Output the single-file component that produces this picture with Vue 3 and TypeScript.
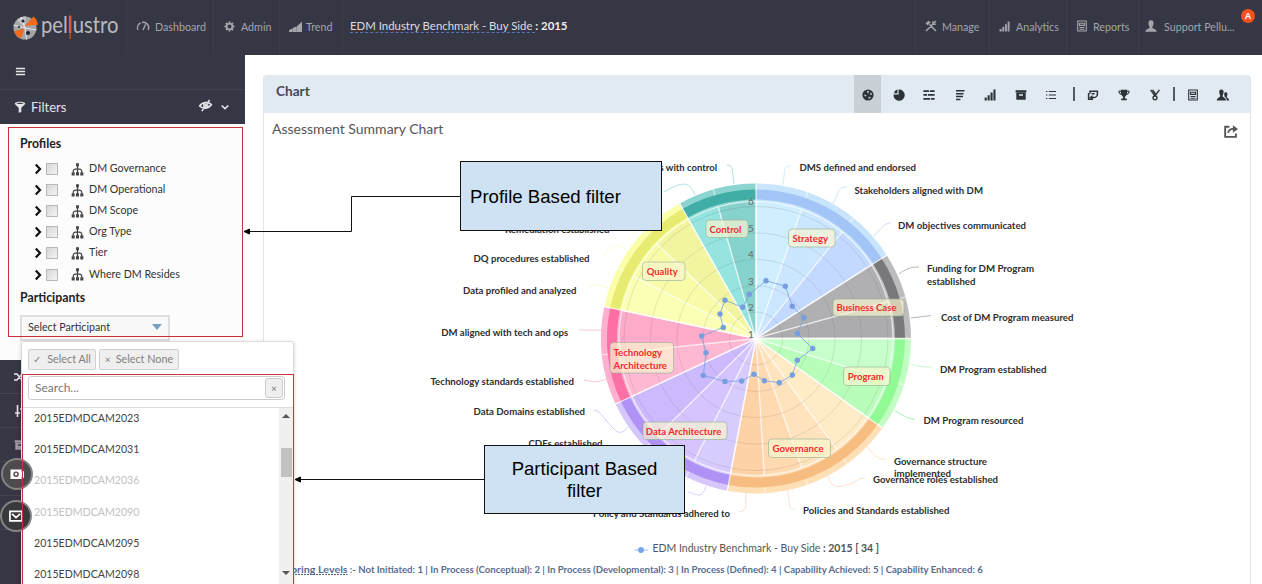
<script setup lang="ts">
import { h } from 'vue'

type Shape = { f?: string; s?: string; w?: number }

const shapes: Record<string, Shape> = {
  gauge: { s: 'M.8 10A5.6 5.6 0 0 1 3.6 3M5 2.5A5.4 5.4 0 0 1 11.2 10M6 10L8.6 4.4', w: 1.4 },
  gear: { s: 'M6 2.8A3.2 3.2 0 1 0 6 9.2A3.2 3.2 0 1 0 6 2.8M6 .6V2.4M6 9.6V11.4M.6 6H2.4M9.6 6H11.4M2.2 2.2L3.4 3.4M8.6 8.6L9.8 9.8M9.8 2.2L8.6 3.4M3.4 8.6L2.2 9.8', w: 2 },
  trend: { f: 'M0 11V9.5L3.4 7.6V11ZM3.6 11V7.4L6 6.2L7 6.8V11ZM7.2 11V5.8L12 1.6V11Z' },
  tools: { s: 'M1 11L8 4M11 11L4.4 4.4M1 3.8L4 1.2M2 4.8L5.2 2M8 1.2L7.8 4.2L10.8 4.2M10.8 1L9 3', w: 1.5 },
  bars: { f: 'M.6 8.6H2.8V11.4H.6ZM3.6 6.2H5.7V11.4H3.6ZM6.5 3.6H8.6V11.4H6.5ZM9.4 .6H11.5V11.4H9.4Z' },
  report: { s: 'M1.7 1H10.3V11H1.7ZM3.5 3.2H8.5V5.4H3.5ZM3.5 7.5H8.5M3.5 9.2H8.5', w: 1.1 },
  user: { f: 'M6 .3C8.3 .3 8.8 2 8.5 4.2C8.2 5.6 7.4 6.4 7.3 7.4C7.5 8.6 11.5 9 11.8 11.8H.2C.5 9 4.5 8.6 4.7 7.4C4.6 6.4 3.8 5.6 3.5 4.2C3.2 2 3.7 .3 6 .3Z' },
  menu: { s: 'M1 2.8H11M1 6H11M1 9.2H11', w: 1.7 },
  funnel: { f: 'M.8 2.3C.8 .2 11.2 .2 11.2 2.3C11.2 4 7.6 5.8 7.3 7V11L4.7 11.8V7C4.4 5.8 .8 4 .8 2.3ZM2.4 2.3C3.4 3.2 8.6 3.2 9.6 2.3C8.6 1.5 3.4 1.5 2.4 2.3Z' },
  eye: { s: 'M.6 6.5C3 2.6 8.5 2.2 11.4 5.2C9.2 9 3.4 9.6 .6 6.5ZM9.8 .8L2.6 11.2M6 4.4A1.8 1.8 0 0 0 5 7.5M7.8 5.2A1.6 1.6 0 0 1 6.4 7.6', w: 1.5 },
  down: { s: 'M2 4.2L6 8L10 4.2', w: 2 },
  right: { s: 'M3.8 1.4L8 6L3.8 10.6', w: 2.2 },
  tree: { s: 'M6 .6V11M2 8.5C2 5.8 3 5.4 6 5.4S10 5.8 10 8.5', w: 1.2, f: 'M4.7 .3H7.3V2.9H4.7ZM.6 8.6H3.4V11.6H.6ZM4.6 8.6H7.4V11.6H4.6ZM8.6 8.6H11.4V11.6H8.6Z' },
  ball: { f: 'M6 .4A5.6 5.6 0 1 0 6 11.6A5.6 5.6 0 1 0 6 .4ZM6.1 5L4.8 2.1L7 1.9ZM7.9 6L8.9 3.2L10.2 5.4ZM4.8 6.2L2 5.4L3 7.8ZM6.8 7.6L9.1 8.7L6.4 9.9Z' },
  pie: { f: 'M5.6 .6V5.4H.6A5.6 5.6 0 1 0 5.6 .6ZM4.5 .6V4.3H.8A5 5 0 0 1 4.5 .6Z' },
  sliders: { s: 'M.4 2.2H6M6.9 2.2H11.6M.4 5.9H4M4.9 5.9H11.6M.4 9.8H7M7.9 9.8H11.6', w: 1.7 },
  align: { s: 'M2 1.8H10.5M2 4.7H9.5M2 7.6H9M2 10.4H6.4', w: 1.5 },
  archive: { f: 'M.6 1.2H11.4V3.4H.6ZM1.3 3.8H10.7V10.8H1.3ZM4 5.2V6.8H8V5.2Z' },
  list: { s: 'M1 2.5H2.4M3.8 2.5H11M1 6H2.4M3.8 6H11M1 9.5H2.4M3.8 9.5H11', w: 1.1 },
  compare: { s: 'M3 4.4V2.2H10.4V5C10.4 7 8.6 8.6 6.6 8.6H4.2M4.6 4.8H7.6M1.6 4V10.2H6', w: 1.5, f: 'M2.4 8.4L5.4 6V11Z' },
  trophy: { f: 'M2.8 .8H9.2V1.8H11.6C11.6 4.6 10.3 5.6 8.4 6C7.8 7 7 7.4 6.9 8.2V9.4H8.8V11.2H3.2V9.4H5.1V8.2C5 7.4 4.2 7 3.6 6C1.7 5.6 .4 4.6 .4 1.8H2.8ZM1.5 2.7C1.7 3.8 2.2 4.4 3.1 4.8L2.8 2.7ZM10.5 2.7H9.2L8.9 4.8C9.8 4.4 10.3 3.8 10.5 2.7Z' },
  medal: { s: 'M1.6 .8L5.6 6.4M10.4 .8L6.4 6.4M3.6 .8L6.4 5M6 7A1.9 1.9 0 1 0 6 10.9A1.9 1.9 0 1 0 6 7', w: 1.4 },
  users: { f: 'M4.4 .4C6.4 .4 6.8 2 6.5 4C6.2 5.4 5.6 6 5.6 7C5.8 8.4 8.8 8.6 9 11.5H-.2C0 8.6 3 8.4 3.2 7C3.2 6 2.6 5.4 2.3 4C2 2 2.4 .4 4.4 .4ZM8.8 3.2C10.4 3.2 10.6 4.6 10.3 6C10 7.2 9.7 7.4 9.8 8C10 9 12 9 12.2 11.5H9.8C9.7 9.2 8.5 8.6 7.5 7.8C7.7 7 7.4 6.6 7.3 6C7 4.6 7.2 3.2 8.8 3.2Z' },
  share: { s: 'M4.6 2.4H1V11H10.2V8.2M3.6 7.6C4 5 5.6 4.2 8 4.2', w: 1.6, f: 'M7.6 1L12 4.2L7.6 7.4Z' },
  shuffle: { s: 'M0 3H3L8 9H12M0 9H3L8 3H12', w: 1.6 },
  hash: { s: 'M3.5 0V12M8.5 0V12M1 8H6M6 4H11', w: 1.6 },
  video: { f: 'M.4 2.2H10V4.4L12 3.4V9.4L10 8.2V10.2H.4ZM5.2 3.8A2.3 2.3 0 1 0 5.2 8.5A2.3 2.3 0 1 0 5.2 3.8ZM5.2 5A1.1 1.1 0 1 1 5.2 7.3A1.1 1.1 0 1 1 5.2 5Z' },
  mail: { s: 'M.8 2H11.2V10.2H.8ZM2.6 4.2L6 7.4L9.6 4.2', w: 1.5 },
}

const Icon = (p: { name: string; size?: number }) => {
  const s = shapes[p.name]
  return h('svg', { viewBox: '0 0 12 12', width: p.size ?? 12, height: p.size ?? 12, class: 'icon' }, [
    s.f ? h('path', { d: s.f, fill: 'currentColor', 'fill-rule': 'evenodd' }) : null,
    s.s ? h('path', { d: s.s, fill: 'none', stroke: 'currentColor', 'stroke-width': s.w }) : null,
  ])
}

const profiles = ['DM Governance', 'DM Operational', 'DM Scope', 'Org Type', 'Tier', 'Where DM Resides']
const participants = [
  { id: '2015EDMDCAM2023', off: false },
  { id: '2015EDMDCAM2031', off: false },
  { id: '2015EDMDCAM2036', off: true },
  { id: '2015EDMDCAM2090', off: true },
  { id: '2015EDMDCAM2095', off: false },
  { id: '2015EDMDCAM2098', off: false },
]
const tools = ['ball', 'pie', 'sliders', 'align', 'bars', 'archive', 'list', '|', 'compare', 'trophy', 'medal', '|', 'report', 'users']

const cx = 756
const cy = 338.5
const pt = (r: number, deg: number) => {
  const a = (deg * Math.PI) / 180
  return `${(cx + r * Math.sin(a)).toFixed(2)} ${(cy - r * Math.cos(a)).toFixed(2)}`
}
const wedge = (r: number, a: number, b: number) => `M${cx} ${cy}L${pt(r, a)}A${r} ${r} 0 0 1 ${pt(r, b)}Z`
const band = (r1: number, r2: number, a: number, b: number) =>
  `M${pt(r1, a)}A${r1} ${r1} 0 0 1 ${pt(r1, b)}L${pt(r2, b)}A${r2} ${r2} 0 0 0 ${pt(r2, a)}Z`

const groups = [
  { at: [0, 19.5, 39, 57.5], fill: ['#cfeeff', '#cbe6ff', '#c3d9ff'], ring: '#a3c4f6', edge: '#c8e5fc' },
  { at: [57.5, 74.5, 90], fill: ['#b0b0b2', '#acacae'], ring: '#79797b', edge: '#bcbcbd' },
  { at: [90, 107.5, 125.3], fill: ['#c6ffc9', '#b8fdba'], ring: '#90fa94', edge: '#c2fdc4' },
  { at: [125.3, 144, 160.6, 176.6, 190.7], fill: ['#ffebc6', '#ffe3bd', '#ffdab1', '#fed2a7'], ring: '#f7bd80', edge: '#ffdfb5' },
  { at: [190.7, 206.8, 225.4, 245], fill: ['#d8ccff', '#d5c4ff', '#cdb9fe'], ring: '#b091f5', edge: '#d5c6fb' },
  { at: [245, 264, 281.9], fill: ['#ffb8d3', '#feaacb'], ring: '#fd70a6', edge: '#ffb0cf' },
  { at: [281.9, 297, 313.7, 330.5], fill: ['#faffb5', '#f8fca9', '#f2f59f'], ring: '#e7eb71', edge: '#faffa8' },
  { at: [330.5, 344, 360], fill: ['#95e4df', '#86d2cc'], ring: '#40ada6', edge: '#8bd4cf' },
]
const scale = [26.5, 53, 79, 105.5, 132]

const points = [
  [766, 280.7], [785.3, 286.2], [792.3, 306.2], [804, 317.7], [797.3, 333.5], [812.7, 348.5], [797.3, 360.2],
  [792.3, 375], [779.3, 382.7], [764.3, 380.7], [754, 374.3], [741.7, 381], [725, 381.4], [703.3, 375.4],
  [706, 352.7], [701.7, 336], [723.3, 327.4], [720, 314], [725, 300.2], [742.7, 307.3], [749.3, 294.2],
]
const line = points.map((p) => p.join(',')).join(' ')

type Label = [string, number, number, number]
const labels: Label[] = [
  ['DMS defined and endorsed', 799.5, 116.5, 171],
  ['Stakeholders aligned with DM', 854.5, 128.5, 193.5],
  ['DM objectives communicated', 898, 128, 228.8],
  ['Funding for DM Program', 927, 107, 272],
  ['established', 927, 48.5, 285],
  ['Cost of DM Program measured', 941, 132.5, 321],
  ['DM Program established', 940, 106.5, 372.5],
  ['DM Program resourced', 923.5, 100, 424],
  ['Governance structure', 894, 93, 465],
  ['implemented', 894, 57, 476.6],
  ['Governance roles established', 873, 125, 483.2],
  ['Policies and Standards established', 803, 146.5, 514.3],
  ['Policy and Standards adhered to', 593, 137, 517.3],
  ['CDEs established', 528.5, 74, 446.5],
  ['Data Domains established', 473.5, 111.5, 415.3],
  ['Technology standards established', 430.5, 143.5, 385],
  ['DM aligned with tech and ops', 441.2, 127, 335.5],
  ['Data profiled and analyzed', 463, 113.5, 293.7],
  ['DQ procedures established', 473.5, 116, 262.4],
  ['Remediation established', 505, 104.5, 233],
  ['s with control', 659.5, 57.5, 171],
]
const tags = [
  { x: 706, y: 220, w: 42, h: 17.5, t: [['Control', 709.5, 32, 232.6]] as Label[] },
  { x: 788.5, y: 229, w: 46.5, h: 18, t: [['Strategy', 792.5, 35.5, 242.3]] as Label[] },
  { x: 833, y: 299, w: 71, h: 17, t: [['Business Case', 836.5, 60, 311.2]] as Label[] },
  { x: 843.5, y: 367, w: 46.5, h: 18.5, t: [['Program', 847.8, 36, 380.4]] as Label[] },
  { x: 768.5, y: 439, w: 62, h: 18.5, t: [['Governance', 772.5, 51, 452.4]] as Label[] },
  { x: 643, y: 422, w: 84, h: 17.5, t: [['Data Architecture', 645.8, 75.5, 434.8]] as Label[] },
  { x: 610, y: 342.5, w: 63.5, h: 30.5, t: [['Technology', 613.5, 48.5, 356.3], ['Architecture', 613.5, 53.5, 368.6]] as Label[] },
  { x: 642.5, y: 262, w: 42.5, h: 18.5, t: [['Quality', 646.7, 31, 275.4]] as Label[] },
]
const leaders = [
  ['M783 185C785 172 783 166 790 166', '#cfeefd'],
  ['M833 204C840 190 838 187 847 187', '#cfe5fd'],
  ['M874 236C882 228 884 223 891 223', '#cfdcf8'],
  ['M899 274C908 267 914 267 919 267', '#b5b5b6'],
  ['M911 318L931 315.5', '#b5b5b6'],
  ['M911 364C920 367 924 367 932 367', '#cbf9cd'],
  ['M895 411C903 415 907 419 915 419', '#a5f3aa'],
  ['M864 443C876 458 878 459 886 459', '#ffe6cc'],
  ['M827 474C832 490 838 487 846 485C856 483 857 478 865 478', '#ffe1cc'],
  ['M787 489C791 504 787 510 795 509', '#ffe4d0'],
  ['M746 492C745 505 749 510 739 512', '#ffe0ca'],
  ['M706 486C702 500 697 494 688 492', '#dccdfb'],
  ['M628 427C620 437 616 431 611 426C601 415 600 411 594 410', '#d9caf9'],
  ['M606 379C594 384 592 381 584 380', '#fbc3d9'],
  ['M602 330C590 330 588 330 579 330', '#fbc3d9'],
  ['M613 288C602 289 596 280 588 287', '#fbfbd2'],
  ['M629 252C616 242 612 244 603 257', '#fbfbd2'],
  ['M695 195C689 179 680 183 664 192', '#a9e4e2'],
  ['M734 184C732 168 733 165 727 165', '#a9dbd8'],
]
</script>

<template>
  <div class="page">
    <header class="top">
      <div class="brand">
        <svg class="logo" viewBox="0 0 26 26" width="26" height="26">
          <circle cx="13" cy="13" r="11.5" fill="#a3a4a8" />
          <path d="M13 13L5 5A11.5 11.5 0 0 1 14 1.5Z" fill="#c4c5c8" />
          <path d="M12.5 11L21.5 1.6A13 13 0 0 1 26 9.8Z" fill="#f36a1e" />
          <path d="M12.5 13.5L2.5 16A11 11 0 0 0 9 23.4Z" fill="#f36a1e" />
          <path d="M13 13L1.6 10M13 13L14.5 24.5M13 13L9 2M13 13L24.5 15" stroke="#e9e9eb" stroke-width="1" />
          <circle cx="11" cy="6" r="1.6" fill="#26272e" />
          <circle cx="16" cy="18" r="2.1" fill="#26272e" />
          <circle cx="7" cy="12" r="1" fill="#26272e" />
        </svg>
        <svg class="wordmark" viewBox="0 0 84 36" width="84" height="36">
          <text x="2" y="23.2" textLength="77.5" lengthAdjust="spacingAndGlyphs">pellustro</text>
          <path d="M31.2 5V29" stroke="#d04a28" stroke-width="1.3" />
        </svg>
      </div>
      <a class="nav n1"><Icon name="gauge" />Dashboard</a>
      <a class="nav n2"><Icon name="gear" :size="11" />Admin</a>
      <a class="nav n3"><Icon name="trend" :size="13" />Trend</a>
      <div class="bench"><span>EDM Industry Benchmark - Buy Side </span><b>: 2015</b></div>
      <a class="nav n4"><Icon name="tools" />Manage</a>
      <a class="nav n5"><Icon name="bars" :size="11" />Analytics</a>
      <a class="nav n6"><Icon name="report" />Reports</a>
      <a class="nav n7"><Icon name="user" />Support Pellu...</a>
      <span class="badge">A</span>
    </header>

    <div class="body">
      <aside class="side">
        <div class="burger"><Icon name="menu" :size="11" /></div>
        <div class="fhead">
          <Icon name="funnel" /><span>Filters</span><Icon name="eye" :size="13" class="eye" /><Icon name="down" :size="10" />
        </div>
        <div class="filters">
          <h4>Profiles</h4>
          <ul>
            <li v-for="p in profiles" :key="p"><Icon name="right" /><i class="check"></i><Icon name="tree" :size="13" class="tree" /><span>{{ p }}</span></li>
          </ul>
          <h4>Participants</h4>
          <div class="select"><span>Select Participant</span><i></i></div>
        </div>
        <div class="rail"><Icon name="shuffle" /></div>
        <div class="rail"><Icon name="hash" /></div>
        <div class="rail dim"><Icon name="archive" /></div>
        <div class="rail"></div>
        <div class="rail"></div>
      </aside>

      <main class="main">
        <section class="panel">
          <div class="phead">
            <h3>Chart</h3>
            <div class="tools">
              <template v-for="(t, i) in tools" :key="i">
                <i v-if="t === '|'" class="bar" :class="{ wide: i === 7 }"></i>
                <span v-else class="tool" :class="{ on: i === 0 }"><Icon :name="t" /></span>
              </template>
            </div>
          </div>
          <div class="ptitle"><span>Assessment Summary Chart</span><Icon name="share" :size="14" /></div>
          <svg class="chart" viewBox="264 150 986 434" width="986" height="434">
            <path v-for="(l, i) in leaders" :key="'l' + i" :d="l[0]" :stroke="l[1]" fill="none" />
            <g v-for="(g, i) in groups" :key="'g' + i">
              <path :d="band(155, 137, g.at[0], g.at[g.at.length - 1])" :fill="g.edge" />
              <path :d="band(149, 139, g.at[0], g.at[g.at.length - 1])" :fill="g.ring" />
              <path v-for="(f, k) in g.fill" :key="k" :d="wedge(137, g.at[k], g.at[k + 1])" :fill="f" stroke="#fff" stroke-opacity=".55" stroke-width="1.4" />
              <path v-for="(f, k) in g.fill" :key="'t' + k" :d="`M${pt(149, g.at[k])}L${pt(155, g.at[k])}`" stroke="#fff" stroke-opacity=".6" stroke-width="1.2" />
            </g>
            <circle v-for="r in scale" :key="r" :cx="cx" :cy="cy" :r="r" fill="none" stroke="#555" stroke-opacity=".15" />
            <path v-for="(g, i) in groups" :key="'e' + i" :d="`M${cx} ${cy}L${pt(155, g.at[0])}`" stroke="#fff" stroke-opacity=".75" stroke-width="1.3" />
            <polygon :points="line" fill="none" stroke="#6f9bdc" stroke-opacity=".75" stroke-width="1" />
            <circle v-for="(p, i) in points" :key="'p' + i" :cx="p[0]" :cy="p[1]" r="2.7" fill="#769ee0" />
            <text v-for="n in 6" :key="'n' + n" x="751" :y="364.3 - n * 26.5" class="axis">{{ n }}</text>
            <g v-for="(t, i) in tags" :key="'c' + i">
              <rect :x="t.x" :y="t.y" :width="t.w" :height="t.h" rx="3.5" fill="#fbf6ce" fill-opacity=".68" stroke="#8fae93" stroke-opacity=".6" />
              <text v-for="s in t.t" :key="s[0]" :x="s[1]" :y="s[3]" :textLength="s[2]" lengthAdjust="spacingAndGlyphs" class="tag">{{ s[0] }}</text>
            </g>
            <text v-for="(l, i) in labels" :key="'s' + i" :x="l[1]" :y="l[3]" :textLength="l[2]" lengthAdjust="spacingAndGlyphs" class="label">{{ l[0] }}</text>
            <path d="M634.5 550H648" stroke="#9dbcf0" />
            <circle cx="641" cy="550" r="2.9" fill="#76a3ee" />
            <text x="652.5" y="552.3" textLength="226.5" lengthAdjust="spacingAndGlyphs" class="legend">EDM Industry Benchmark - Buy Side <tspan class="strong">: 2015 [ 34 ]</tspan></text>
            <text x="280" y="572.5" textLength="67.5" lengthAdjust="spacingAndGlyphs" class="score">Scoring Levels</text>
            <path d="M280 574.5H347.5" stroke="#4e6286" stroke-dasharray="2 1" />
            <text x="349.8" y="572.5" textLength="633" lengthAdjust="spacingAndGlyphs" class="score">:- Not Initiated: 1 | In Process (Conceptual): 2 | In Process (Developmental): 3 | In Process (Defined): 4 | Capability Achieved: 5 | Capability Enhanced: 6</text>
          </svg>
        </section>
      </main>
    </div>

    <div class="drop">
      <div class="btns"><button><em>✓</em>Select All</button><button><em>×</em>Select None</button></div>
      <div class="search"><span>Search...</span><b>×</b></div>
      <div class="scroll">
        <ul>
          <li v-for="p in participants" :key="p.id" :class="{ off: p.off }">{{ p.id }}</li>
        </ul>
        <div class="sbar"><i class="up"></i><i class="thumb"></i><i class="dn"></i></div>
      </div>
    </div>

    <div class="fab cam"><Icon name="video" :size="14" /></div>
    <div class="fab post"><Icon name="mail" :size="14" /></div>

    <div class="mark m1"></div>
    <div class="mark m2"></div>
    <svg class="arrows" width="1262" height="584" viewBox="0 0 1262 584">
      <path d="M460 196.5H351.5V231.5H249M484 479.5H299" fill="none" stroke="#111" />
      <path d="M244 231.5L249.5 229V234ZM295 479.5L300.5 477V482Z" fill="#000" stroke="#000" />
    </svg>
    <div class="note a">Profile Based filter</div>
    <div class="note b">Participant Based<br />filter</div>
  </div>
</template>

<style>
body { margin: 0; overflow: hidden; }
</style>

<style scoped>
* { box-sizing: border-box; }
.page { position: relative; width: 1262px; height: 584px; overflow: hidden; background: #fff; font-family: Lato, "Liberation Sans", sans-serif; color: #333; }
.icon { flex: none; display: block; overflow: visible; }
.top { display: flex; height: 55px; background: #353744; color: #a4a5ab; font-size: 10.7px; position: relative; }
.brand { width: 126px; display: flex; align-items: flex-start; padding: 14.5px 0 0 12px; }
.logo { flex: none; }
.wordmark { margin: -4.5px 0 0 1px; flex: none; }
.wordmark text { font-family: Lato, sans-serif; font-size: 23px; font-weight: 400; fill: #b9babf; }
.nav { display: flex; align-items: center; gap: 6px; height: 55px; padding-bottom: 3px; border-left: 1px solid #3c3e4a; padding-left: 10px; white-space: nowrap; }
.n1 { width: 87px; }
.n2 { width: 66px; }
.n3 { width: 63px; gap: 4px; padding-left: 9px; }
.n4 { width: 74px; padding-left: 9px; gap: 5px; }
.n5 { width: 77px; padding-left: 9px; }
.n6 { width: 72px; padding-left: 9px; gap: 5px; }
.n7 { width: 110px; gap: 7px; padding-left: 6px; }
.bench { width: 573px; padding: 19px 0 0 7px; border-left: 1px solid #3c3e4a; color: #dcdde2; font-size: 11.4px; line-height: 14px; white-space: pre; }
.bench span { border-bottom: 1px dashed #5876b4; }
.bench b { color: #eee; }
.badge { position: absolute; left: 1241px; top: 9px; width: 14px; height: 14px; border-radius: 50%; background: #f4511e; color: #fff; font: bold 9px/14px "Liberation Sans", sans-serif; text-align: center; }
.body { display: flex; height: 529px; }
.side { width: 245px; background: #353744; color: #e4e5ea; }
.burger { height: 35px; padding: 11px 0 0 15px; border-bottom: 1px solid #41434f; }
.fhead { display: flex; align-items: center; height: 34px; padding: 0 15px 0 14px; font-size: 13px; }
.fhead span { margin-left: 5px; flex: 1; }
.eye { margin: -3px 8px 0 0; }
.filters { height: 236px; background: #fcfcfc; color: #3b3b3b; padding: 12px 0 0 20px; }
.filters h4 { margin: 0; font-size: 12.3px; line-height: 15px; color: #222; }
.filters ul { list-style: none; margin: 6px 0 6px; padding: 0 0 0 12px; }
.filters li { display: flex; align-items: center; height: 21.1px; font-size: 10.7px; color: #333; }
.filters li > .icon:first-child { color: #111; margin: 3px 2px 0 0; }
.check { width: 12px; height: 12px; border: 1px solid #b8b8b8; background: linear-gradient(135deg, #d6d6d6, #f4f4f4); margin: 3px 13px 0 0; }
.tree { color: #444; margin: 3px 5px 0 0; }
.select { width: 150px; height: 26px; margin-top: 10px; border: 2px solid #dedede; background: #f8f8f8; display: flex; align-items: center; justify-content: space-between; padding: 0 6px 2px; font-size: 10.7px; color: #333; }
.select i { border: 5px solid transparent; border-top: 6px solid #7d9fc0; border-bottom: 0; }
.rail { height: 34px; border-bottom: 1px solid #43454f; padding: 11px 0 0 14px; }
.rail.dim { color: #999ba3; }
.main { width: 1017px; padding: 20px 0 0 18px; }
.panel { width: 988px; height: 520px; border: 1px solid #e2e4e7; border-top: 0; border-radius: 4px 4px 0 0; overflow: hidden; }
.phead { height: 38px; background: #e1e9f1; display: flex; justify-content: space-between; margin: 0 -1px; }
.phead h3 { margin: 8px 0 0 13px; font-size: 13.6px; line-height: 17px; color: #474a50; }
.tools { display: flex; align-items: stretch; margin-right: 12.5px; color: #2d3238; }
.tool { width: 27px; margin: 0 1.8px; display: flex; align-items: center; justify-content: center; padding-top: 1px; }
.tool.on { background: #c9d1d7; }
.bar { width: 2px; height: 14px; margin: 12px 2.7px 0 2.7px; background: #555b62; }
.bar.wide { margin-left: 6.7px; }
.ptitle { display: flex; height: 37px; padding: 7px 12px 0 8px; justify-content: space-between; align-items: flex-start; font-size: 14px; line-height: 17px; color: #555; }
.ptitle .icon { margin-top: 4px; }
.chart { display: block; font-family: Lato, sans-serif; }
.axis { font-size: 10px; fill: #666; text-anchor: middle; }
.tag { font-size: 10px; font-weight: 700; fill: #f22a2e; }
.label { font-size: 9.6px; font-weight: 700; fill: #2e2e2e; }
.legend { font-size: 11.5px; fill: #555; }
.strong { font-weight: 700; }
.score { font-size: 9.4px; font-weight: 700; fill: #5a6d8e; }
.drop { position: absolute; left: 21px; top: 341px; width: 273px; height: 260px; background: #fff; border: 1px solid #ddd; border-radius: 3px; box-shadow: 0 1px 4px rgba(0, 0, 0, .18); }
.btns { display: flex; gap: 3px; padding: 7px 0 0 6px; }
.btns button { height: 21px; width: 68px; padding: 0 0 2px; border: 1px solid #d0d0d0; border-radius: 2px; background: #efefef; font: 10.8px Lato, sans-serif; color: #808080; white-space: nowrap; }
.btns button + button { width: 80px; }
.btns em { font-style: normal; font-size: 10px; margin-right: 6px; }
.btns button + button em { margin-right: 5px; }
.search { display: flex; justify-content: space-between; align-items: center; width: 257px; height: 24px; margin: 6px 0 0 6px; border: 1px solid #ccc; border-radius: 3px; padding-left: 6px; font-size: 12px; color: #777; }
.search span { padding-bottom: 2px; }
.search b { width: 18px; height: 20px; margin-right: 1px; border: 1px solid #ccc; border-radius: 3px; background: #efefef; font-size: 10px; font-weight: 400; line-height: 18px; text-align: center; }
.scroll { display: flex; justify-content: space-between; margin-top: 7px; height: 190px; border-top: 1px solid #ddd; overflow: hidden; }
.scroll ul { list-style: none; margin: -5px 0 0; padding: 0 0 0 12px; }
.scroll li { height: 31.2px; line-height: 31px; font-size: 10.6px; color: #444; }
.scroll li.off { color: #c2c2c2; }
.sbar { width: 14px; height: 177px; background: #f0f0f0; display: flex; flex-direction: column; align-items: center; padding-top: 6px; }
.up { border: 4px solid transparent; border-bottom: 4px solid #555; border-top: 0; }
.thumb { width: 11px; height: 29px; margin: 30px 0 94px; background: #c1c1c1; }
.dn { border: 4px solid transparent; border-top: 4px solid #555; border-bottom: 0; }
.fab { position: absolute; width: 32px; height: 32px; border-radius: 50%; border: 2px solid #858585; background: #4c4c4e; color: #fff; display: flex; align-items: center; justify-content: center; }
.cam { left: 1px; top: 458px; }
.post { left: 0; top: 500px; background: #38393b; }
.mark { position: absolute; border: 1px solid #c8323a; }
.m1 { left: 8px; top: 127px; width: 235px; height: 210px; }
.m2 { left: 22px; top: 374px; width: 272px; height: 220px; }
.arrows { position: absolute; left: 0; top: 0; }
.note { position: absolute; background: #cfe2f3; border: 1px solid #111; color: #000; font: 18.6px/22px "Liberation Sans", Arial, sans-serif; }
.a { left: 460px; top: 161px; width: 202px; height: 70px; padding: 24px 0 0 9px; }
.b { left: 484px; top: 445px; width: 201px; height: 69px; padding-top: 12px; text-align: center; }
</style>
